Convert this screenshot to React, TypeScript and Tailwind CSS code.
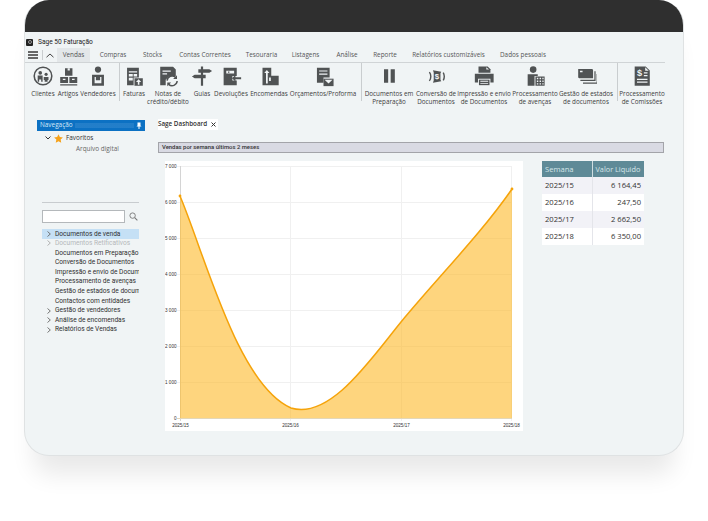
import React from "react";

const C = "#505354";

const Icons: Record<string, React.ReactNode> = {
  clientes: (
    <>
      <circle cx="12" cy="12" r="9.6" fill="none" stroke={C} strokeWidth="1.7" />
      <circle cx="9" cy="8.6" r="2" fill={C} />
      <path d="M6.2 11.4h5.4v7h-1.6v-2.600h-2.200v2.600H6.200z" fill={C} />
      <circle cx="15.4" cy="10.2" r="1.7" fill={C} />
      <path d="M12.8 13h5.2v3.400h-1v2h-3.200v-2h-1z" fill={C} />
    </>
  ),
  artigos: (
    <>
      <path d="M8 2.500h8.500v8.500H8z" fill={C} />
      <path d="M11 2.500h2.500V5H11z" fill="#f0f4f5" />
      <path d="M2.500 12.500h9v7h-9zM13 12.500h9v7h-9z" fill={C} />
      <path d="M5.500 14.500h3v1.600h-3zM16 14.500h3v1.600h-3z" fill="#f0f4f5" />
      <path d="M2.500 20.800h19.500v1.400H2.500z" fill={C} />
    </>
  ),
  vendedores: (
    <>
      <circle cx="12" cy="5" r="3.400" fill={C} />
      <path d="M5.500 10.500h13v12h-13z" fill={C} />
      <path d="M8.300 13v7h7.400v-7h-1.400v3.600h-4.600V13z" fill="#f0f4f5" />
    </>
  ),
  faturas: (
    <>
      <path d="M3.500 2h13.500v20H3.500z" fill={C} />
      <path d="M5.500 6h9.500v1.400H5.500zM5.500 9h4.500v3H5.500zM11 9h4v3h-4zM5.500 13.500h4.500v3H5.500z" fill="#f0f4f5" />
      <path d="M11 13h11v9.500H11z" fill="#f0f4f5" />
      <path d="M12 14h9.500v8.500H12z" fill={C} />
      <path d="M16.700 15.200l3 3.200h-2.100v3h-1.800v-3h-2.100z" fill="#f0f4f5" />
    </>
  ),
  notas: (
    <>
      <path d="M3.500 2h14l3 3v7h-7l-4 4v6h-6z" fill={C} />
      <path d="M6 6h9v1.300H6zM6 9h5v1.300H6z" fill="#f0f4f5" />
      <path d="M11 17a5.500 5.500 0 0 1 9.200-3.600" fill="none" stroke={C} strokeWidth="1.600" />
      <path d="M21.800 11.200v4.200h-4.200z" fill={C} />
      <path d="M22 17.500a5.500 5.500 0 0 1-9.200 3.600" fill="none" stroke={C} strokeWidth="1.600" />
      <path d="M11.200 23.200v-4.200h4.200z" fill={C} />
    </>
  ),
  guias: (
    <>
      <path d="M10.800 1.500h2.400v21h-2.400z" fill={C} />
      <path d="M8 4.500h12l3 2-3 2H8zM16 10.500H4l-3 2 3 2h12z" fill={C} />
    </>
  ),
  devolucoes: (
    <>
      <path d="M3 2h15v9.500h-5v5h5V22H3z" fill={C} />
      <path d="M6 5.500h9v3H6z" fill="#f0f4f5" />
      <path d="M8 6.300h1.600v1.400H8z" fill={C} />
      <path d="M12.500 14l4-3.600v2.500H23v2.200h-6.500v2.500z" fill={C} />
    </>
  ),
  encomendas: (
    <>
      <path d="M4 2h10v9h8.500v11H4z" fill={C} />
      <path d="M9 4.500l3 3.600h-2v12H8v-12H6z" fill="#f0f4f5" />
      <path d="M11.500 13h2v4h-2z" fill="#f0f4f5" />
    </>
  ),
  orcamentos: (
    <>
      <path d="M4.500 2H19v11h-7v6H4.500z" fill={C} />
      <path d="M7 5h9.500v1.400H7zM7 8.500h9.500v1.400H7z" fill="#f0f4f5" />
      <path d="M12 14.500h11.500V23H12z" fill={C} />
      <path d="M13.200 15.800h9.100l-4.550 4.200z" fill="#f0f4f5" />
    </>
  ),
  pausa: <path d="M6 4h5v16H6zM14 4h5v16h-5z" fill={C} />,
  conversao: (
    <>
      <path d="M7.500 4l10.500 2-1 2v8l1 2-10.500 2 1-3V7z" fill={C} />
      <text x="12.700" y="15.600" fontSize="10" fontWeight="700" textAnchor="middle" fill="#f0f4f5" fontFamily="Liberation Sans, sans-serif">$</text>
      <path d="M3 6.500c2.400 3 2.400 8 0 11M20.500 7c1.600 3 1.600 7 0 10" fill="none" stroke={C} strokeWidth="1.800" />
    </>
  ),
  impressao: (
    <>
      <path d="M6 1.500h10l3 3v4H6z" fill={C} />
      <path d="M14.500 2.500l3 2.500h-3z" fill="#f0f4f5" />
      <path d="M2 9.500h20.500V19H19v-4H5.500v4H2z" fill={C} />
      <path d="M6.500 16h11.500v6H6.500z" fill={C} />
      <path d="M8 17.300h8.500v1H8zM8 19.500h8.500v1H8z" fill="#f0f4f5" />
    </>
  ),
  processamento: (
    <>
      <circle cx="10" cy="5" r="3.600" fill={C} />
      <path d="M4 10h11v2H11.500v10.500H4z" fill={C} />
      <path d="M12.500 12.500h10v10h-10z" fill={C} />
      <path d="M14 14h1.600v1.600H14zM17 14h1.600v1.600H17zM20 14h1.400v1.600H20zM14 17h1.600v1.600H14zM17 17h1.600v1.600H17zM20 17h1.400v1.600H20zM14 20h1.600v1.400H14zM17 20h1.600v1.400H17zM20 20h1.400v1.400H20z" fill="#f0f4f5" />
    </>
  ),
  gestao: (
    <>
      <path d="M2.500 3.500h15.500a1.500 1.500 0 0 1 1.500 1.500v9H4a1.500 1.500 0 0 1-1.500-1.500z" fill={C} />
      <path d="M4.500 5.500h3v1.600h-3z" fill="#f0f4f5" />
      <path d="M21 6v9.600H5v1.400h17.400V6zM23.600 9v9.800H8v1.400h17V9z" fill={C} />
    </>
  ),
  comissoes: (
    <>
      <path d="M4 1.500h12l4.500 4.500v16.500H4z" fill={C} />
      <path d="M15.500 2.500l3.800 3.800h-3.800z" fill="#f0f4f5" />
      <text x="9.200" y="12" fontSize="10" fontWeight="700" textAnchor="middle" fill="#f0f4f5" fontFamily="Liberation Sans, sans-serif">$</text>
      <path d="M14 8h4v1.300h-4zM14 11h4v1.300h-4zM6.500 15h11.500v1.300H6.500zM6.500 18h11.500v1.300H6.500z" fill="#f0f4f5" />
    </>
  ),
};

function Tool({ w, icon, size = 22, lines }: { w: string; icon: string; size?: number; lines: string[] }) {
  return (
    <div className={`${w} flex flex-col items-center shrink-0`}>
      <div className="h-[26px] flex items-center justify-center">
        <svg width={size} height={size} viewBox="0 0 24 24">
          {Icons[icon]}
        </svg>
      </div>
      <div className="mt-[1px] text-[6.3px] leading-[7.5px] text-[#3d3d3d] text-center whitespace-nowrap flex flex-col items-center">
        {lines.map((l) => (
          <span key={l}>{l}</span>
        ))}
      </div>
    </div>
  );
}

function Sep({ w }: { w: string }) {
  return (
    <div className={`${w} flex justify-center shrink-0`}>
      <div className="w-px h-[38px] bg-[#c9cdcf]" />
    </div>
  );
}

const tabs: [string, string][] = [
  ["Compras", "w-[46px]"],
  ["Stocks", "w-[33px]"],
  ["Contas Correntes", "w-[72px]"],
  ["Tesouraria", "w-[41px]"],
  ["Listagens", "w-[47px]"],
  ["Análise", "w-[36px]"],
  ["Reporte", "w-[40px]"],
  ["Relatórios customizáveis", "w-[87px]"],
  ["Dados pessoais", "w-[62px]"],
];

const tree: [string, boolean, boolean][] = [
  ["Documentos de venda", true, false],
  ["Documentos Retificativos", true, true],
  ["Documentos em Preparação", false, false],
  ["Conversão de Documentos", false, false],
  ["Impressão e envio de Documentos", false, false],
  ["Processamento de avenças", false, false],
  ["Gestão de estados de documentos", false, false],
  ["Contactos com entidades", false, false],
  ["Gestão de vendedores", true, false],
  ["Análise de encomendas", true, false],
  ["Relatórios de Vendas", true, false],
];

const rows = [
  ["2025/15", "6 164,45"],
  ["2025/16", "247,50"],
  ["2025/17", "2 662,50"],
  ["2025/18", "6 350,00"],
];

const curve = "M180 196C205 255 238 385 291 408C330 420 370 360 401 322C440 275 480 235 512 189";

function Chart() {
  const ys: [number, string][] = [
    [166.5, "7 000"],
    [202.5, "6 000"],
    [238.5, "5 000"],
    [274.5, "4 000"],
    [310.5, "3 000"],
    [346.5, "2 000"],
    [382.5, "1 000"],
    [418.5, "0"],
  ];
  const xs: [number, string][] = [
    [180.5, "2025/15"],
    [290.5, "2025/16"],
    [401.5, "2025/17"],
    [511.5, "2025/18"],
  ];
  return (
    <svg width="358" height="270" viewBox="165 161 358 270" className="block bg-white" fontFamily="Liberation Sans, sans-serif">
      {ys.map(([y, t]) => (
        <g key={t}>
          <line x1="177" x2="512" y1={y} y2={y} stroke="#f0f0f0" />
          <text x="176.500" y={y + 1.7} fontSize="4.600" textAnchor="end" fill="#333">{t}</text>
        </g>
      ))}
      {xs.map(([x, t]) => (
        <g key={t}>
          <line x1={x} x2={x} y1="166" y2="421" stroke={x === 180.5 ? "#d4d4d4" : "#f0f0f0"} />
          <text x={x} y="426.500" fontSize="4.600" textAnchor="middle" fill="#333">{t}</text>
        </g>
      ))}
      <path d={`${curve}L512 418L180 418Z`} fill="#fdbc2f" fillOpacity="0.62" />
      <line x1="177" x2="512" y1="418.500" y2="418.500" stroke="#e3d7b8" />
      <path d={curve} fill="none" stroke="#f5a30a" strokeWidth="1.500" />
      <circle cx="180" cy="196" r="1.400" fill="#f5a30a" />
      <circle cx="512" cy="189" r="1.400" fill="#f5a30a" />
    </svg>
  );
}

export default function App() {
  return (
    <div className="w-[708px] h-[521px] bg-white overflow-hidden font-['Open_Sans',sans-serif] text-[#333]">
      <div className="ml-[24px] w-[660px] h-[456px] flex flex-col rounded-t-[25px] rounded-b-[25px] bg-[#f0f4f5] border-x border-b border-[#dfe2e3] shadow-[0_28px_24px_-10px_rgba(0,0,0,0.09)] overflow-hidden">
        <div className="h-[32px] shrink-0 bg-[#2f2f2f] -mx-px" />

        <div className="h-[16px] shrink-0 flex items-center pl-[1px] gap-[5px] pt-[4px]">
          <div className="w-[7px] h-[7px] bg-[#222] rounded-[1px] flex items-center justify-center">
            <div className="w-[4px] h-[4px] rounded-full border border-[#9a9a9a]" />
          </div>
          <span className="font-['Roboto',sans-serif] text-[6.6px] leading-none text-[#222]">Sage 50 Faturação</span>
        </div>

        <div className="h-[15px] shrink-0 flex items-stretch border-b border-[#d0d4d6] mr-[18px]">
          <div className="w-[15px] flex flex-col justify-center gap-[1.500px] pl-[3px] pr-[2px]">
            <div className="h-[1.500px] bg-[#666]" />
            <div className="h-[1.500px] bg-[#666]" />
            <div className="h-[1.500px] bg-[#666]" />
          </div>
          <div className="w-px bg-[#c9cdcf] my-[2px] ml-[2px]" />
          <div className="w-[14px] flex items-center justify-center">
            <svg width="8" height="5" viewBox="0 0 8 5">
              <path d="M0.500 4.200L4 1l3.500 3.200" fill="none" stroke="#444" strokeWidth="1" />
            </svg>
          </div>
          <div className="w-[33px] bg-[#e3e7e9] flex items-center justify-center text-[6.350px] text-[#555]">Vendas</div>
          {tabs.map(([t, w]) => (
            <div key={t} className={`${w} shrink-0 flex items-center justify-center text-[6.350px] text-[#555] whitespace-nowrap`}>
              {t}
            </div>
          ))}
        </div>

        <div className="h-[42px] shrink-0 flex items-start pl-[5px]">
          <Tool w="w-[26px]" icon="clientes" size={22} lines={["Clientes"]} />
          <Tool w="w-[24px]" icon="artigos" size={21} lines={["Artigos"]} />
          <Tool w="w-[36px]" icon="vendedores" size={22} lines={["Vendedores"]} />
          <Sep w="w-[6px]" />
          <Tool w="w-[24px]" icon="faturas" size={21} lines={["Faturas"]} />
          <Tool w="w-[44px]" icon="notas" size={22} lines={["Notas de", "crédito/débito"]} />
          <Tool w="w-[24px]" icon="guias" size={22} lines={["Guias"]} />
          <Tool w="w-[34px]" icon="devolucoes" size={21} lines={["Devoluções"]} />
          <Tool w="w-[42px]" icon="encomendas" size={21} lines={["Encomendas"]} />
          <Tool w="w-[66px]" icon="orcamentos" size={21} lines={["Orçamentos/Proforma"]} />
          <Sep w="w-[10px]" />
          <Tool w="w-[46px]" icon="pausa" size={20} lines={["Documentos em", "Preparação"]} />
          <Tool w="w-[48px]" icon="conversao" size={19} lines={["Conversão de", "Documentos"]} />
          <Tool w="w-[48px]" icon="impressao" size={22} lines={["Impressão e envio", "de Documentos"]} />
          <Tool w="w-[54px]" icon="processamento" size={22} lines={["Processamento", "de avenças"]} />
          <Tool w="w-[48px]" icon="gestao" size={21} lines={["Gestão de estados", "de documentos"]} />
          <Sep w="w-[14px]" />
          <Tool w="w-[36px]" icon="comissoes" size={22} lines={["Processamento", "de Comissões"]} />
        </div>

        <div className="flex-1 flex pt-[15px] pl-[12px]">
          <aside className="w-[108px] shrink-0 flex flex-col">
            <div className="h-[11px] bg-[#0c71c3] flex items-center pl-[3px] pr-[3px] gap-[2px]">
              <span className="text-[6.400px] leading-none text-[#d6e9f8]">Navegação</span>
              <div className="flex-1 h-[5px] bg-[radial-gradient(circle,#3d8dd0_0.600px,transparent_0.800px)] bg-[length:2px_2px]" />
              <svg width="6" height="7" viewBox="0 0 6 7">
                <path d="M1.500 0.500h3v3l1 1h-2v2.500h-1v-2.500h-2l1-1z" fill="#fff" />
              </svg>
            </div>
            <div className="h-[71px] pl-[8px] pt-[2px] flex flex-col">
              <div className="h-[10px] flex items-center">
                <svg width="6" height="4" viewBox="0 0 6 4">
                  <path d="M0.500 0.500L3 3l2.500-2.500" fill="none" stroke="#333" strokeWidth="1" />
                </svg>
                <svg width="9" height="9" viewBox="0 0 10 10" className="ml-[3px]">
                  <path d="M5 0.300l1.500 3.100 3.400.450-2.500 2.350.65 3.400L5 8l-3.050 1.600.65-3.400L.1 3.850l3.400-.45z" fill="#f5a21b" />
                </svg>
                <span className="ml-[3px] text-[6.400px] leading-none text-[#333]">Favoritos</span>
              </div>
              <div className="mt-[1px] pl-[31px] text-[6.400px] leading-[10px] text-[#666]">Arquivo digital</div>
            </div>
            <div className="ml-[5px] w-[97px] h-px bg-[#c8cccf]" />
            <div className="ml-[5px] mt-[7px] flex items-center h-[13px]">
              <div className="w-[83px] h-[13px] bg-white border border-[#b4b8bb]" />
              <svg width="9" height="9" viewBox="0 0 10 10" className="ml-[4px]">
                <circle cx="4" cy="4" r="3" fill="none" stroke="#777" strokeWidth="1" />
                <path d="M6.300 6.300L9.300 9.300" stroke="#777" strokeWidth="1.200" />
              </svg>
            </div>
            <div className="ml-[5px] mt-[6px] w-[97px] overflow-hidden">
              {tree.map(([t, arrow, muted], i) => (
                <div key={t} className={`h-[9.600px] flex items-center whitespace-nowrap overflow-hidden ${i === 0 ? "bg-[#c5e0f5]" : ""}`}>
                  <div className="w-[13px] shrink-0 pl-[5px] flex items-center">
                    {arrow && (
                      <svg width="4" height="6" viewBox="0 0 4 6">
                        <path d="M0.500 0.500L3.300 3L0.500 5.500" fill="none" stroke={muted ? "#aaa" : "#666"} strokeWidth="0.900" />
                      </svg>
                    )}
                  </div>
                  <span className={`font-['Roboto',sans-serif] text-[6.600px] leading-none ${muted ? "text-[#b5b8ba]" : "text-[#2f2f2f]"}`}>{t}</span>
                </div>
              ))}
            </div>
          </aside>

          <main className="ml-[13px] flex-1 flex flex-col">
            <div className="w-[60px] h-[11px] -mt-[1px] bg-white flex items-center">
              <span className="text-[6.300px] font-semibold leading-none text-[#333] whitespace-nowrap">Sage Dashboard</span>
              <svg width="5" height="5" viewBox="0 0 5 5" className="ml-[4px]">
                <path d="M0.500 0.500L4.500 4.500M4.500 0.500L0.500 4.500" stroke="#333" strokeWidth="1" />
              </svg>
            </div>
            <div className="mt-[12px] w-[506px] h-[11px] bg-[#d9dae3] border border-[#a3a4a9] flex items-center pl-[3px]">
              <span className="font-['Roboto',sans-serif] text-[5.900px] font-medium leading-none text-[#333]">Vendas por semana últimos 2 meses</span>
            </div>
            <div className="mt-[8px] ml-[7px] flex items-start gap-[19px]">
              <Chart />
              <table className="w-[102px] border-collapse text-[7.600px] leading-none bg-white">
                <thead>
                  <tr className="h-[16px] bg-[#5f8a97] text-[#d5e6ea]">
                    <th className="w-[50px] font-normal text-left pl-[3px] pt-[1px] border-r border-[#cfdde1]">Semana</th>
                    <th className="font-normal text-[7.300px] text-left pl-[3px] pt-[1px] whitespace-nowrap">Valor Liquido</th>
                  </tr>
                </thead>
                <tbody>
                  {rows.map(([a, b], i) => (
                    <tr key={a} className={`h-[17px] ${i % 2 === 0 ? "bg-[#f2f2f7]" : "bg-white"}`}>
                      <td className="pl-[3px] pt-[1px] border-r border-[#e4e5ea] text-[#333]">{a}</td>
                      <td className="pr-[3px] pt-[1px] text-right text-[#333]">{b}</td>
                    </tr>
                  ))}
                </tbody>
              </table>
            </div>
          </main>
        </div>
      </div>
    </div>
  );
}
